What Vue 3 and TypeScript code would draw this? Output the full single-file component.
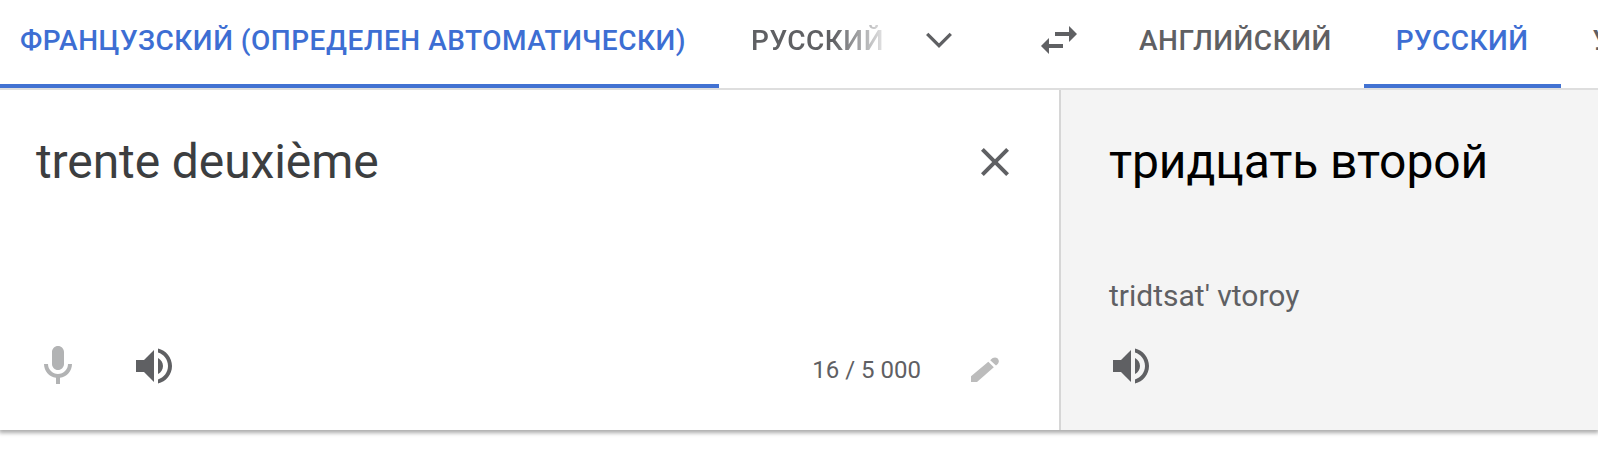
<script setup lang="ts">
interface Tab {
  label: string
  active?: boolean
  faded?: boolean
}

const sourceTabs: Tab[] = [
  { label: 'ФРАНЦУЗСКИЙ (ОПРЕДЕЛЕН АВТОМАТИЧЕСКИ)', active: true },
  { label: 'РУССКИЙ', faded: true },
]
const targetTabs: Tab[] = [
  { label: 'АНГЛИЙСКИЙ' },
  { label: 'РУССКИЙ', active: true },
  { label: 'У' },
]

const sourceText = 'trente deuxième'
const translation = 'тридцать второй'
const transliteration = "tridtsat' vtoroy"
const limit = '5 000'

const speakerPath =
  'M3 9v6h4l5 5V4L7 9H3zm13.5 3c0-1.77-1.02-3.29-2.5-4.03v8.05c1.48-.73 2.5-2.25 2.5-4.02zM14 3.23v2.06c2.89.86 5 3.54 5 6.71s-2.11 5.85-5 6.71v2.06c4.01-.91 7-4.49 7-8.77s-2.99-7.86-7-8.77z'
</script>

<template>
  <div class="translator">
    <header class="languages">
      <nav class="tabs source-tabs">
        <button v-for="t in sourceTabs" :key="t.label" class="tab" :class="{ active: t.active, faded: t.faded }">
          {{ t.label }}
        </button>
      </nav>
      <button class="icon more" aria-label="more">
        <svg viewBox="0 0 48 48"><path d="M12.2 17.9 24 29.7 35.8 17.9" fill="none" stroke="currentColor" stroke-width="3.3" /></svg>
      </button>
      <button class="icon swap" aria-label="swap">
        <svg viewBox="0 0 24 24"><path d="M6.99 11L3 15l3.99 4v-3H14v-2H6.99v-3zM21 9l-3.99-4v3H10v2h7.01v3L21 9z" /></svg>
      </button>
      <nav class="tabs target-tabs">
        <button v-for="t in targetTabs" :key="t.label" class="tab" :class="{ active: t.active }">{{ t.label }}</button>
      </nav>
    </header>

    <main class="panes">
      <section class="pane source">
        <div class="row">
          <div class="text source-text">{{ sourceText }}</div>
          <button class="icon" aria-label="clear">
            <svg viewBox="0 0 24 24"><path d="M19 6.41L17.59 5 12 10.59 6.41 5 5 6.41 10.59 12 5 17.59 6.41 19 12 13.41 17.59 19 19 17.59 13.41 12z" /></svg>
          </button>
        </div>
        <div class="tools">
          <button class="icon muted" aria-label="voice">
            <svg viewBox="0 0 24 24"><path d="M12 14c1.66 0 3-1.34 3-3V5c0-1.66-1.34-3-3-3S9 3.34 9 5v6c0 1.66 1.34 3 3 3zm5-3c0 2.76-2.24 5-5 5s-5-2.24-5-5H5c0 3.53 2.61 6.43 6 6.92V21h2v-3.08c3.39-.49 6-3.39 6-6.92h-2z" /></svg>
          </button>
          <button class="icon" aria-label="listen">
            <svg viewBox="0 0 24 24"><path :d="speakerPath" /></svg>
          </button>
          <span class="counter">{{ sourceText.length + 1 }} / {{ limit }}</span>
          <button class="icon pencil" aria-label="edit">
            <svg viewBox="0 0 28 25">
              <path d="M0 19.2 17.3 4.8 22.8 10.2 6 25H0z" />
              <path d="M19.2 3.2C22.6-.6 26 .1 27.3 2.4 28.6 4.6 27.6 6.6 25 8.4z" />
            </svg>
          </button>
        </div>
      </section>

      <section class="pane target">
        <div class="text">{{ translation }}</div>
        <div class="translit">{{ transliteration }}</div>
        <button class="icon listen" aria-label="listen">
          <svg viewBox="0 0 24 24"><path :d="speakerPath" /></svg>
        </button>
      </section>
    </main>
  </div>
</template>

<style>
body {
  margin: 0;
  background: #fff;
  overflow: hidden;
}
</style>

<style scoped>
.translator {
  width: 1598px;
  height: 467px;
  overflow: hidden;
  font-family: Roboto, 'Liberation Sans', sans-serif;
  color: #5f6063;
}
button {
  margin: 0;
  padding: 0;
  border: 0;
  background: none;
  font: inherit;
  color: inherit;
}
.languages {
  position: relative;
  z-index: 1;
  display: flex;
  height: 88px;
  background: #fff;
  border-bottom: 2px solid #dedede;
}
.tabs {
  display: flex;
  flex: none;
  overflow: hidden;
}
.source-tabs {
  width: 915px;
}
.target-tabs {
  width: 491px;
  margin-left: 24px;
}
.tab {
  flex: none;
  box-sizing: border-box;
  height: 88px;
  padding: 0 32px 4px;
  border-bottom: 4px solid transparent;
  font-size: 28px;
  font-weight: 500;
  letter-spacing: 0.5px;
  white-space: nowrap;
}
.source-tabs .tab:first-child {
  padding-right: 33px;
  padding-left: 20px;
}
.tab.active {
  color: #3d6ed3;
  border-bottom-color: #4272d2;
}
.tab.faded {
  -webkit-mask-image: linear-gradient(to right, #000 114px, rgba(0, 0, 0, 0.2) 163px);
  mask-image: linear-gradient(to right, #000 114px, rgba(0, 0, 0, 0.2) 163px);
}
.icon {
  display: block;
  flex: none;
  width: 48px;
  height: 48px;
}
.icon svg {
  display: block;
  width: 100%;
  height: 100%;
  fill: currentColor;
}
.more,
.swap {
  margin-top: 16px;
}
.swap {
  margin-left: 72px;
}
.panes {
  display: flex;
  height: 340px;
  box-shadow: 0 2px 4px 1px rgba(0, 0, 0, 0.33);
}
.pane {
  display: flex;
  flex-direction: column;
  box-sizing: border-box;
}
.source {
  width: 1061px;
  padding: 40px 40px 40px 36px;
  border-right: 2px solid #d6d6d6;
  justify-content: space-between;
}
.target {
  flex: 1;
  padding: 40px 0 40px 48px;
  background: #f4f4f4;
}
.row {
  display: flex;
  justify-content: space-between;
  padding-top: 8px;
}
.text {
  font-size: 48px;
  line-height: 64px;
  letter-spacing: -0.1px;
  color: #000;
  white-space: nowrap;
}
.source-text {
  margin-top: -8px;
  color: #3c3e40;
}
.tools {
  display: flex;
  align-items: center;
  margin-left: -2px;
}
.tools .icon + .icon {
  margin-left: 48px;
}
.muted {
  color: #b2b3b4;
}
.counter {
  margin-left: auto;
  padding-top: 8px;
  font-size: 24px;
  line-height: 28px;
}
.pencil {
  width: 28px;
  height: 25px;
  margin: 6px 20px 0 50px;
  color: #bcbcbc;
}
.translit {
  margin-top: 84px;
  font-size: 30px;
  line-height: 36px;
}
.listen {
  margin: 28px 0 0 -2px;
}
</style>
